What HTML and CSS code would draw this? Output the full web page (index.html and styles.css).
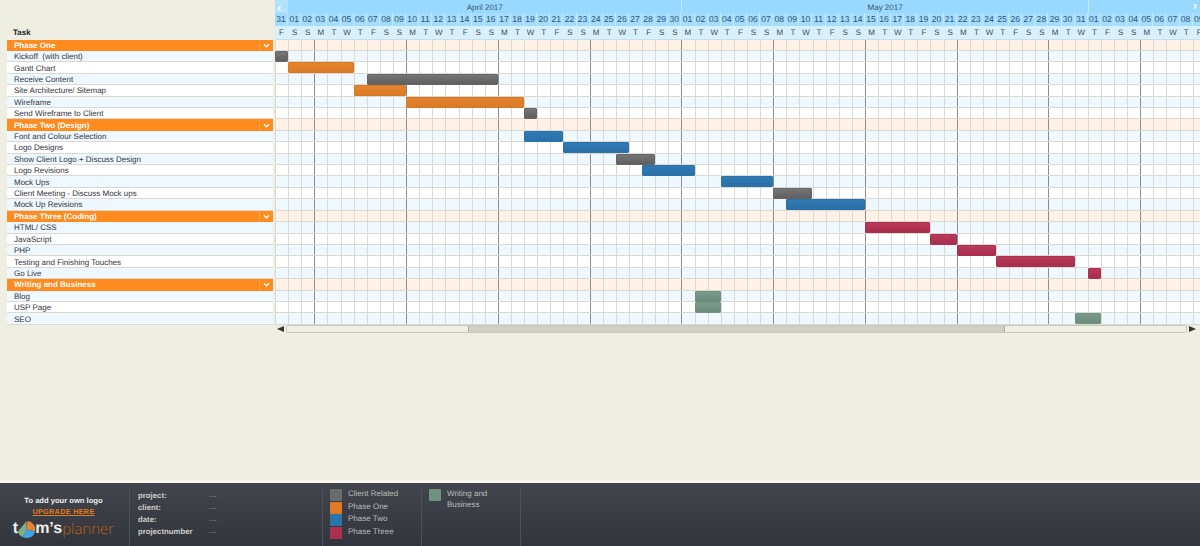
FILE: index.html

```html
<!DOCTYPE html>
<html lang="en">
<head>
  <meta charset="UTF-8">
  <title>Tom's Planner</title>
  <link rel="stylesheet" href="styles.css">
</head>
<body>

<div class="planner">
  <div class="head">
    <div class="task-title">Task</div>
    <div class="calendar">
      <div class="cal-row months" id="months"></div>
      <div class="cal-row dates" id="dates"></div>
      <div class="cal-row weekdays" id="weekdays"></div>
      <span class="cal-next">›</span>
    </div>
  </div>

  <div id="rows"></div>

  <div class="scroller">
    <span class="scroll-arrow left"></span>
    <div class="scroll-track">
      <div class="scroll-before"></div>
      <div class="scroll-thumb"></div>
      <div class="scroll-after"></div>
    </div>
    <span class="scroll-arrow right"></span>
  </div>
</div>

<footer class="footer">
  <div class="foot-logo">
    <div class="logo-note">To add your own logo</div>
    <a class="logo-upgrade">UPGRADE HERE</a>
    <div class="logo">
      <span class="logo-white">t</span>
      <svg class="logo-pie" viewBox="0 0 20 20" width="19" height="19">
        <path d="M10 10 L11 1 A9 9 0 0 1 19 12 Z" fill="#e8822c"/>
        <path d="M10 10 L19 12 A9 9 0 0 1 6 18 Z" fill="#3fa6e6"/>
        <path d="M10 10 L6 18 A9 9 0 0 1 1 12 L10 1 Z" fill="#7fae8e"/>
      </svg>
      <span class="logo-white">m’s</span><span class="logo-orange">planner</span>
    </div>
  </div>
  <div class="foot-info">
    <div class="info-row"><b>project:</b><span>....</span></div>
    <div class="info-row"><b>client:</b><span>....</span></div>
    <div class="info-row"><b>date:</b><span>....</span></div>
    <div class="info-row"><b>projectnumber</b><span>....</span></div>
  </div>
  <div class="foot-legend first">
    <div class="legend-item"><i class="swatch grey"></i>Client Related</div>
    <div class="legend-item"><i class="swatch orange"></i>Phase One</div>
    <div class="legend-item"><i class="swatch blue"></i>Phase Two</div>
    <div class="legend-item"><i class="swatch red"></i>Phase Three</div>
  </div>
  <div class="foot-legend second">
    <div class="legend-item"><i class="swatch green"></i>Writing and<br>Business</div>
  </div>
</footer>

<script>
  // columns: first day shown is 31 March 2017
  const DAYS = 71;
  const letters = ["S", "M", "T", "W", "T", "F", "S"];

  let dateCells = "", dayCells = "";
  for (let i = 0; i < DAYS; i++) {
    const d = new Date(2017, 2, 31 + i);
    dateCells += "<span>" + String(d.getDate()).padStart(2, "0") + "</span>";
    dayCells += "<span>" + letters[d.getDay()] + "</span>";
  }
  document.getElementById("dates").innerHTML = dateCells;
  document.getElementById("weekdays").innerHTML = dayCells;
  document.getElementById("months").innerHTML =
    '<span class="cal-prev">‹</span>' +
    '<span class="month m-april">April 2017</span>' +
    '<span class="month m-may">May 2017</span>' +
    '<span class="month m-june"></span>';

  // [name, bar colour, first column, length]
  const rows = [
    ["Phase One"],
    ["Kickoff  (with client)", "grey", 0, 1],
    ["Gantt Chart", "orange", 1, 5],
    ["Receive Content", "grey", 7, 10],
    ["Site Architecture/ Sitemap", "orange", 6, 4],
    ["Wireframe", "orange", 10, 9],
    ["Send Wireframe to Client", "grey", 19, 1],
    ["Phase Two (Design)"],
    ["Font and Colour Selection", "blue", 19, 3],
    ["Logo Designs", "blue", 22, 5],
    ["Show Client Logo + Discuss Design", "grey", 26, 3],
    ["Logo Revisions", "blue", 28, 4],
    ["Mock Ups", "blue", 34, 4],
    ["Client Meeting - Discuss Mock ups", "grey", 38, 3],
    ["Mock Up Revisions", "blue", 39, 6],
    ["Phase Three (Coding)"],
    ["HTML/ CSS", "red", 45, 5],
    ["JavaScript", "red", 50, 2],
    ["PHP", "red", 52, 3],
    ["Testing and Finishing Touches", "red", 55, 6],
    ["Go Live", "red", 62, 1],
    ["Writing and Business"],
    ["Blog", "green", 32, 2],
    ["USP Page", "green", 32, 2],
    ["SEO", "green", 61, 2]
  ];

  let html = "", stripe = 0;
  rows.forEach(r => {
    if (r.length === 1) {
      stripe = 0;
      html += '<div class="row group"><div class="task"><span class="task-name">' + r[0] +
        '</span><span class="toggle"><svg viewBox="0 0 8 5" width="7" height="5"><path d="M1 1 L4 4 L7 1" fill="none" stroke="#fff" stroke-width="1.5"/></svg></span></div><div class="track"></div></div>';
    } else {
      const cls = stripe % 2 === 0 ? "odd" : "even";
      stripe++;
      html += '<div class="row ' + cls + '"><div class="task"><span class="task-name">' + r[0] +
        '</span></div><div class="track"><div class="bar ' + r[1] + '" style="grid-column:' +
        (r[2] + 1) + ' / span ' + r[3] + '"></div></div></div>';
    }
  });
  document.getElementById("rows").innerHTML = html;
</script>

</body>
</html>
```

FILE: styles.css

```css
:root { --day: 13.11px; --row: 11.42px; }

* { box-sizing: border-box; }
html, body { margin: 0; height: 100%; }
body { height: 546px; display: flex; flex-direction: column; overflow: hidden; background: #eeeee2; font-family: "Liberation Sans", Arial, sans-serif; font-size: 8px; color: #33333d; text-rendering: geometricPrecision; }

.planner { flex: 1; min-height: 0; overflow: hidden; }

/* header */
.head { display: flex; height: 39.6px; }
.task-title { width: 275px; padding: 28px 0 0 13px; font-weight: bold; font-size: 8px; color: #222; }
.calendar { position: relative; width: 925px; overflow: hidden; }
.cal-row { display: grid; grid-template-columns: repeat(71, var(--day)); height: 13px; }
.cal-row span { display: flex; align-items: center; justify-content: center; }

.months { background: #99d8ff; color: #35566e; }
.months span { padding-bottom: 3px; }
.cal-prev { grid-column: 1; background: #b2e2ff; color: #fff; font-size: 13px; font-weight: bold; padding-right: 5px; }
.month { border-left: 1px solid #c0e7ff; }
.m-april { grid-column: 2 / span 30; border-left: 0; }
.m-may { grid-column: 32 / span 31; }
.m-june { grid-column: 63 / span 9; }
.cal-next { position: absolute; top: -2px; right: 3px; color: #fff; font-size: 13px; font-weight: bold; }

.dates { background: #c2e8fd; color: #30566e; font-size: 8.6px; }
.dates span { background: #a3dcff; margin-right: 1px; padding-bottom: 1px; }
.weekdays { height: 13.6px; background: #d8effc; color: #3d4f5e; font-size: 8px; border-bottom: 1px solid #c6dfee; }

/* rows */
.row { display: flex; height: var(--row); }
.task { display: flex; align-items: center; width: 266px; margin: 0 2px 0 7px; padding: 1px 0 0 7px; border-bottom: 1px solid #d9d9d2; }
.task-name { flex: 1; white-space: pre; overflow: hidden; }
.track {
  display: grid;
  grid-template-columns: repeat(71, var(--day));
  width: 925px;
  border-bottom: 1px solid #d9d9d2;
  background-image:
    repeating-linear-gradient(to right, transparent 0 39.33px, #8c8c8c 39.33px 40.33px, transparent 40.33px 91.77px),
    repeating-linear-gradient(to right, #dadad3 0 1px, transparent 1px 13.11px);
}
.odd .task, .odd .track { background-color: #eef8fe; }
.even .task, .even .track { background-color: #fff; }

.group .task { background: #ff8a1e; color: #fff; font-weight: bold; border-bottom-color: #ff8a1e; }
.group .track { background-color: #fff1e6; }
.toggle { display: flex; align-items: center; justify-content: center; width: 14px; height: 100%; border-left: 1px solid #ffa552; }

/* bars */
.bar { height: 11px; border-radius: 1px; border: 1px solid transparent; }
.bar.grey { background: linear-gradient(#757575, #5f5f5f); border-color: #666; }
.bar.orange { background: linear-gradient(#e3842f, #dc7a26); border-color: #d77720; }
.bar.blue { background: linear-gradient(#3079b2, #2a70a8); border-color: #2a72aa; }
.bar.red { background: linear-gradient(#b93a5a, #a92d4d); border-color: #ab3050; }
.bar.green { background: linear-gradient(#7a9a8b, #6b8d7c); border-color: #6f9180; }

/* scrollbar */
.scroller { display: flex; align-items: center; gap: 2px; margin: 0 0 0 277px; height: 9px; width: 919px; }
.scroll-arrow { width: 0; height: 0; border-top: 3px solid transparent; border-bottom: 3px solid transparent; }
.scroll-arrow.left { border-right: 7px solid #333; }
.scroll-arrow.right { border-left: 7px solid #333; }
.scroll-track { flex: 1; display: flex; height: 8px; border: 1px solid #c8c8bc; border-radius: 2px; background: #efefe3; }
.scroll-before { width: 181px; }
.scroll-thumb { width: 537px; background: #cfcfc6; border-left: 1px solid #aeaea4; border-right: 1px solid #aeaea4; }

/* footer */
.footer { display: flex; height: 66px; flex-shrink: 0; border-top: 3px solid #f7f7f0; background: linear-gradient(#42464c, #32353b); color: #c8c8c8; padding-top: 6px; }
.foot-logo { width: 130px; height: 57px; border-right: 1px solid #4e5258; padding-top: 7px; text-align: center; }
.logo-note { font-weight: bold; font-size: 7.6px; color: #eee; line-height: 10px; margin-right: 2px; }
.logo-upgrade { display: block; font-weight: bold; font-size: 7.2px; letter-spacing: .35px; line-height: 12px; color: #e57a1c; text-decoration: underline; margin-right: 2px; }
.logo { display: flex; align-items: center; justify-content: center; height: 20px; margin: 1px 2px 0 0; font-size: 16px; font-weight: bold; }
.logo-pie { margin: 0 -1px; }
.logo-white { color: #eee; }
.logo-orange { color: #b9621a; font-family: "Open Sans", sans-serif; font-weight: 300; font-size: 15px; }

.foot-info { width: 193px; height: 57px; border-right: 1px solid #4e5258; padding: 1px 0 0 8px; }
.info-row { display: flex; height: 12px; line-height: 12px; }
.info-row b { width: 71px; color: #cfcfcf; font-size: 7.8px; }
.info-row span { font-size: 7px; color: #aaa; }

.foot-legend { height: 58px; margin-top: -1px; border-right: 1px solid #4e5258; padding-left: 7px; }
.foot-legend.first { width: 99px; }
.foot-legend.second { width: 99px; }
.legend-item { position: relative; padding-left: 18px; min-height: 12.7px; line-height: 11px; font-size: 8px; color: #bdbdbd; }
.swatch { position: absolute; left: 0; top: 1px; width: 12px; height: 12px; border-radius: 1px; }
.swatch.grey { background: #6c6c6c; }
.swatch.orange { background: #df7b27; }
.swatch.blue { background: #2b74ac; }
.swatch.red { background: #ab3050; }
.swatch.green { background: #6f9180; }
```
